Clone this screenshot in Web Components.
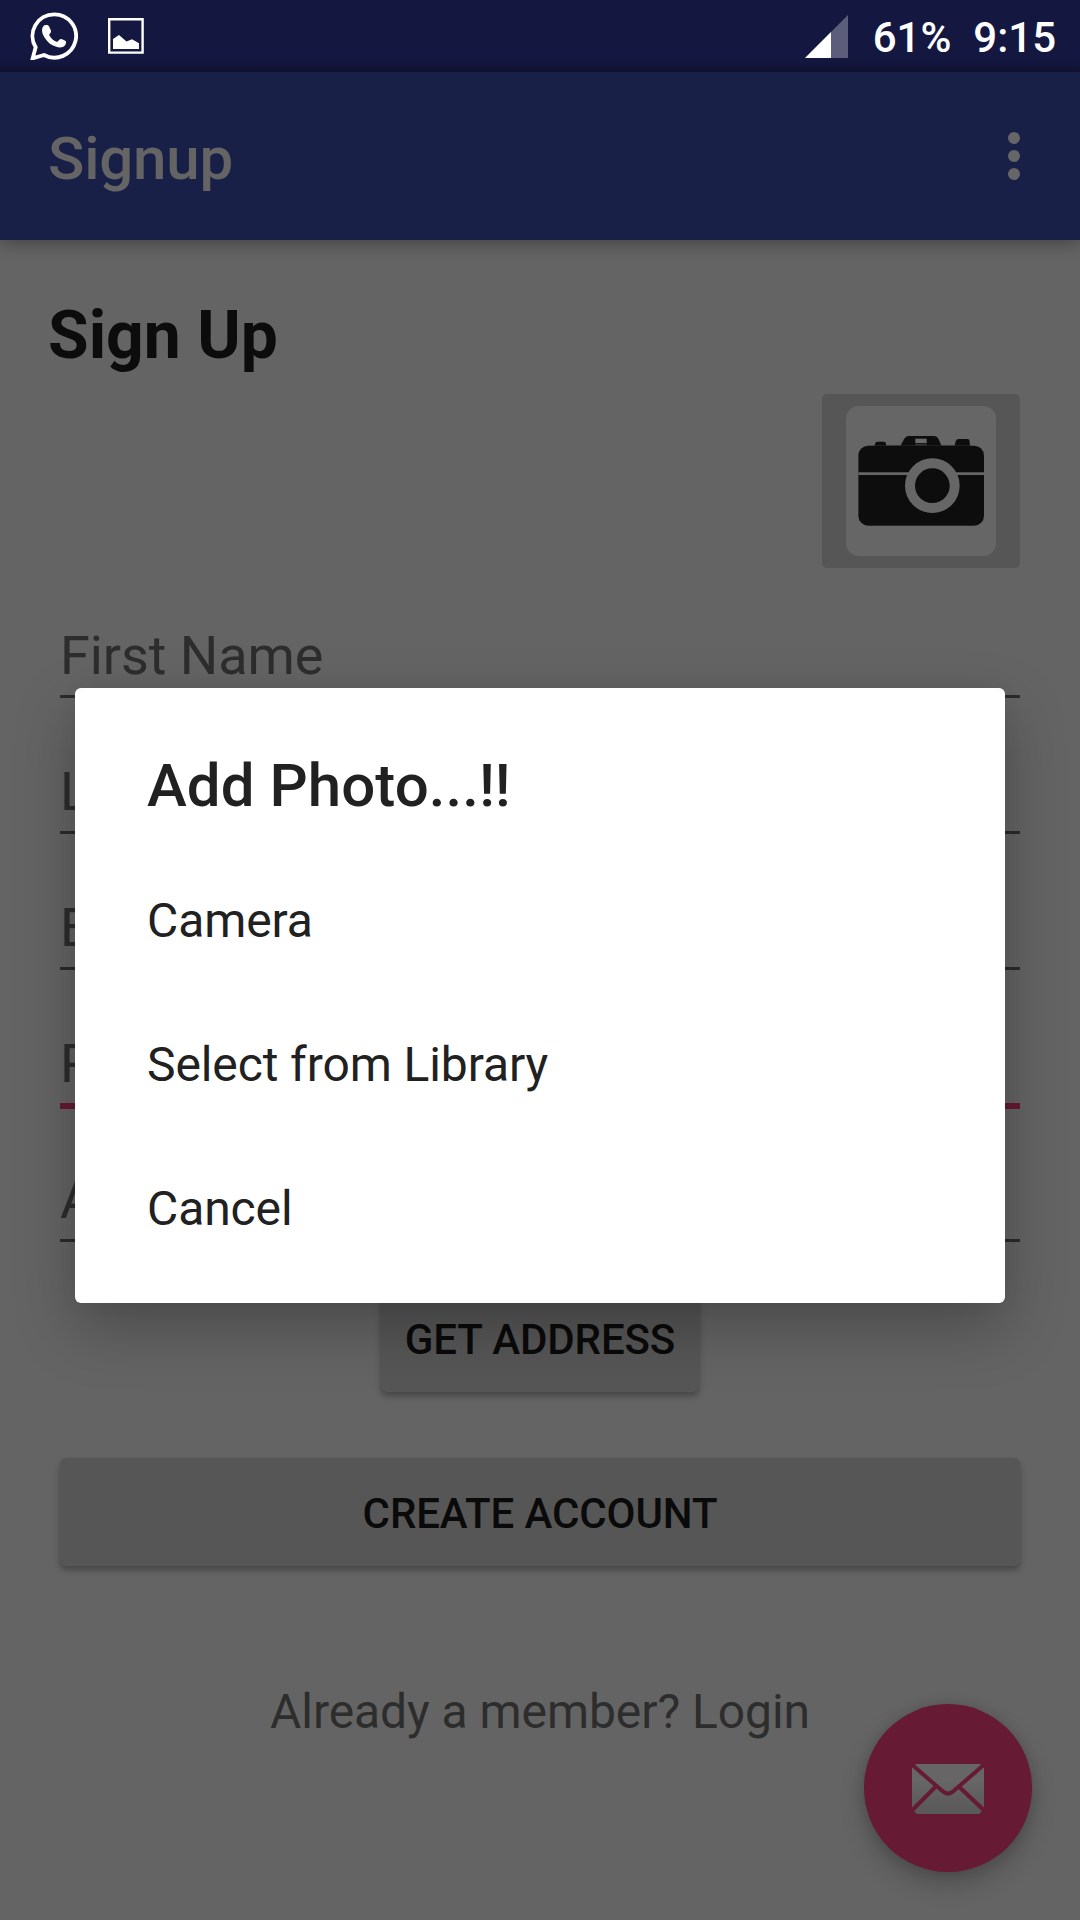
<!DOCTYPE html>
<html lang="en">
<head>
<meta charset="utf-8">
<title>Signup</title>
<style>
html,body{margin:0;padding:0}
body{width:1080px;height:1920px;overflow:hidden;background:#646464;font-family:Roboto,sans-serif}
</style>
</head>
<body>
<signup-screen></signup-screen>
<script>
function define(name, html){
  const t = document.createElement('template');
  t.innerHTML = html;
  customElements.define(name, class extends HTMLElement{
    constructor(){
      super();
      this.attachShadow({mode:'open'}).appendChild(t.content.cloneNode(true));
    }
  });
}

define('status-bar', `
<style>
:host{display:flex;align-items:center;justify-content:space-between;box-sizing:border-box;height:72px;padding:0 24px 0 30px;
 background:linear-gradient(#141840 0,#141840 60px,#13163a 66px,#111332 72px);color:#fff;font:500 42px/72px Roboto,sans-serif}
.l,.r{display:flex;align-items:center;height:72px}
.l{gap:30px}
svg{display:block}
.sig{margin-right:25px}
.pct{margin-right:22px}
span{padding-top:4px}
</style>
<div class="l">
 <svg width="48" height="48" viewBox="90 36 144 144">
  <path d="M163 43a65 65 0 1 1-31 122l-34 10 9-33a65 65 0 0 1 56-99z" fill="none" stroke="#fff" stroke-width="11.5"/>
  <path d="M133 76c6-2 11-2 14 3l6 13c1 4-2 8-6 12 5 10 13 18 24 22l9-8c3-2 7-1 18 6 1 7-2 13-8 16-9 5-22 1-32-4-15-8-28-26-31-38-2-9-1-17 6-22z" fill="#fff"/>
 </svg>
 <svg width="36" height="36" viewBox="0 0 36 36">
  <path d="M1.200 1.200h33.400v33.400H1.200z" fill="none" stroke="#fff" stroke-width="2.4"/>
  <path d="M5 31V21l6-4 7.500 6.500L24 21.300l7 4V31z" fill="#fff"/>
 </svg>
</div>
<div class="r">
 <svg class="sig" width="43" height="43" viewBox="0 0 43 43"><path d="M43 0v43H0z" fill="#5b5d7a"/><path d="M26 17v26H0z" fill="#fff"/></svg>
 <span class="pct">61%</span><span>9:15</span>
</div>`);

define('app-bar', `
<style>
:host{display:flex;align-items:center;justify-content:space-between;box-sizing:border-box;height:168px;padding:0 60px 0 48px;
 background:#192047;color:#646464;box-shadow:0 4px 15px rgba(0,0,0,.3)}
.t{font:500 60px/70px Roboto,sans-serif;padding-top:6px;letter-spacing:-.2px}
svg{display:block}
</style>
<div class="t"><slot></slot></div>
<svg width="12" height="48" viewBox="0 0 12 48" fill="#666"><circle cx="6" cy="6" r="6"/><circle cx="6" cy="24" r="6"/><circle cx="6" cy="42" r="6"/></svg>`);

define('photo-button', `
<style>
:host{display:flex;align-items:center;justify-content:center;width:198px;height:174px;border-radius:5px;background:#565656}
svg{display:block}
</style>
<svg width="150" height="150" viewBox="138 108 450 450">
 <defs><filter id="soft"><feGaussianBlur stdDeviation="1.8"/></filter></defs>
 <rect x="138" y="108" width="450" height="450" rx="38" fill="#666"/>
 <g filter="url(#soft)">
  <g fill="#0d0b0d">
   <path d="M223 230l3-11q2-4 7-4h18q7 0 7 6v9zM300 230l13-24q4-8 12-8h78q8 0 12 8l11 24zM463 230l4-16q2-7 9-7h26q7 0 7 7l1 16z"/>
   <rect x="175" y="227" width="377" height="240" rx="30"/>
  </g>
  <rect x="346" y="206" width="34" height="13" fill="#6a6a6a"/>
  <rect x="346" y="221" width="34" height="6" fill="#333"/>
  <path d="M222 226.500h288" stroke="#2c2b2c" stroke-width="2"/>
  <path d="M175 311h377" stroke="#666" stroke-width="8"/>
  <circle cx="397" cy="347" r="67" fill="#0d0b0d" stroke="#666" stroke-width="30"/>
 </g>
</svg>`);

define('text-field', `
<style>
:host{display:block;box-sizing:border-box;height:136px;color:#2d2d2d}
.t{box-sizing:border-box;height:75px;padding-top:4px;font:400 54px/64px Roboto,sans-serif;letter-spacing:-.07px;white-space:nowrap}
.u{height:3px;background:#2b2b2b}
:host([active]) .u{height:6px;background:#661a34}
</style>
<div class="t"><slot></slot></div><div class="u"></div>`);

define('raised-button', `
<style>
:host{display:flex;align-items:center;justify-content:center;box-sizing:border-box;height:108px;padding-top:4px;border-radius:6px;
 background:#565656;color:#0a0a0a;font:500 42px/50px Roboto,sans-serif;letter-spacing:-.1px;white-space:nowrap;box-shadow:0 4px 6px rgba(0,0,0,.3)}
</style>
<slot></slot>`);

define('mail-fab', `
<style>
:host{display:flex;align-items:center;justify-content:center;width:168px;height:168px;border-radius:50%;background:#661a33;
 box-shadow:0 12px 24px rgba(0,0,0,.22),0 0 12px rgba(0,0,0,.12)}
svg{display:block;margin-top:2px}
</style>
<svg width="72" height="50" viewBox="276 311 216 150">
 <defs><linearGradient id="g" x1="0" y1="0" x2="0" y2="1"><stop offset=".35" stop-color="#666"/><stop offset="1" stop-color="#585858"/></linearGradient></defs>
 <rect x="276" y="311" width="216" height="150" fill="url(#g)"/>
 <g fill="none" stroke="#661a33" stroke-width="12">
  <path d="M276 313l92 80q16 14 32 0l92-80M346 380l-72 72M418 380l76 72"/>
 </g>
 <path d="M276 311h12l-12 12zM492 311v12l-12-12zM276 461v-16l14 16zM492 461v-16l-14 16z" fill="#661a33"/>
</svg>`);

define('dialog-item', `
<style>
:host{display:flex;align-items:center;height:144px;color:#212121;font:400 48px/56px Roboto,sans-serif;letter-spacing:-.1px}
</style>
<slot></slot>`);

define('alert-dialog', `
<style>
:host{display:flex;flex-direction:column;box-sizing:border-box;width:930px;height:615px;padding:63px 72px 0;border-radius:6px;
 background:#fff;box-shadow:0 24px 60px rgba(0,0,0,.26),0 0 24px rgba(0,0,0,.03)}
h2{flex:none;margin:0 0 28px;color:#212121;font:500 60px/70px Roboto,sans-serif;letter-spacing:.05px}
::slotted(dialog-item){flex:none}
</style>
<h2><slot name="title"></slot></h2>
<slot></slot>`);

define('signup-screen', `
<style>
:host{display:flex;flex-direction:column;position:relative;width:1080px;height:1920px;overflow:hidden;background:#646464}
app-bar,status-bar{flex:none}
main{display:flex;flex-direction:column;padding:0 60px}
h1{margin:57px 0 0 -12px;height:97px;color:#0c0c0c;font:700 66px/78px Roboto,sans-serif}
photo-button{align-self:flex-end}
.fields{display:flex;flex-direction:column;margin-top:52px}
.get{align-self:center;width:318px;margin-top:-16px}
.create{margin-top:66px}
.login{margin-top:118px;text-align:center;color:#2d2d2d;font:400 48px/56px Roboto,sans-serif;letter-spacing:-.06px}
mail-fab{position:absolute;right:48px;bottom:48px}
.overlay{position:absolute;inset:72px 0 0 0;display:flex;align-items:center;justify-content:center;padding-bottom:1px}
</style>
<status-bar></status-bar>
<app-bar>Signup</app-bar>
<main>
 <h1>Sign Up</h1>
 <photo-button></photo-button>
 <div class="fields">
  <text-field>First Name</text-field>
  <text-field>L</text-field>
  <text-field>E</text-field>
  <text-field active>P</text-field>
  <text-field>A</text-field>
 </div>
 <raised-button class="get">GET ADDRESS</raised-button>
 <raised-button class="create">CREATE ACCOUNT</raised-button>
 <div class="login">Already a member? Login</div>
</main>
<mail-fab></mail-fab>
<div class="overlay">
 <alert-dialog>
  <span slot="title">Add Photo...!!</span>
  <dialog-item>Camera</dialog-item>
  <dialog-item>Select from Library</dialog-item>
  <dialog-item>Cancel</dialog-item>
 </alert-dialog>
</div>`);
</script>
</body>
</html>
